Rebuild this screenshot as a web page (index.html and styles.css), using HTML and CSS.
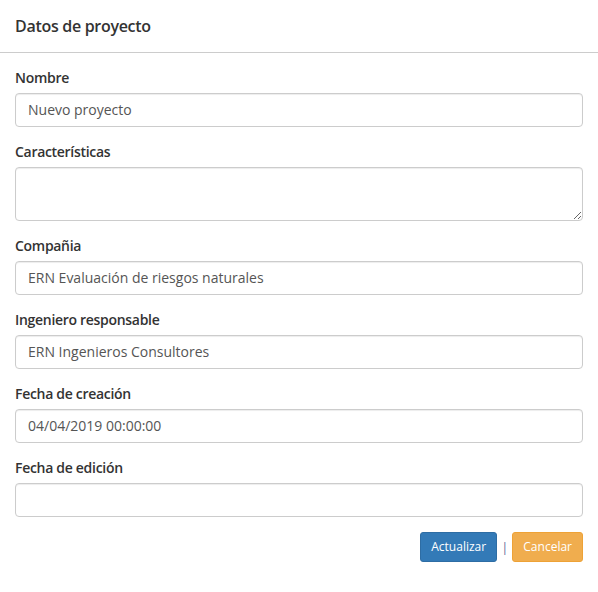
FILE: index.html
```html
<!DOCTYPE html>
<html lang="es">
<head>
    <meta charset="UTF-8">
    <meta name="viewport" content="width=device-width, initial-scale=1.0">
    <title>Datos de proyecto</title>
    <link rel="stylesheet" href="styles.css">
</head>
<body>

<div class="modal">
    <div class="modal-header">
        <h4 class="modal-title">Datos de proyecto</h4>
    </div>
    <div class="modal-body">
        <div class="form-group">
            <label for="nombre">Nombre</label>
            <input type="text" id="nombre" class="form-control" value="Nuevo proyecto">
        </div>
        <div class="form-group">
            <label for="caracteristicas">Características</label>
            <textarea id="caracteristicas" class="form-control" rows="2"></textarea>
        </div>
        <div class="form-group">
            <label for="compania">Compañia</label>
            <input type="text" id="compania" class="form-control" value="ERN Evaluación de riesgos naturales">
        </div>
        <div class="form-group">
            <label for="ingeniero">Ingeniero responsable</label>
            <input type="text" id="ingeniero" class="form-control" value="ERN Ingenieros Consultores">
        </div>
        <div class="form-group">
            <label for="creacion">Fecha de creación</label>
            <input type="text" id="creacion" class="form-control" value="04/04/2019 00:00:00">
        </div>
        <div class="form-group">
            <label for="edicion">Fecha de edición</label>
            <input type="text" id="edicion" class="form-control">
        </div>
        <div class="actions">
            <button class="btn btn-primary">Actualizar</button>
            <span class="sep">|</span>
            <button class="btn btn-warning">Cancelar</button>
        </div>
    </div>
</div>

</body>
</html>
```

FILE: styles.css
```css
body {
    font-family: "Open Sans", Arial, sans-serif;
    font-size: 14px;
    line-height: 1.42857;
    color: #333;
    background-color: white;
    margin: 0;
}
.modal {
    background-color: white;
}
.modal-header {
    padding: 15px;
    border-bottom: 1px solid #ccc;
}
.modal-title {
    margin: 0;
    font-size: 16px;
    font-weight: 600;
    letter-spacing: -0.3px;
    line-height: 22px;
}
.modal-body {
    padding: 15px;
}
.form-group {
    margin-bottom: 15px;
}
label {
    display: block;
    margin-bottom: 5px;
    font-weight: 600;
    letter-spacing: -0.3px;
}
.form-control {
    display: block;
    width: 100%;
    height: 34px;
    padding: 6px 12px;
    font-family: inherit;
    font-size: 14px;
    line-height: 1.42857;
    color: #555;
    background-color: white;
    border: 1px solid #ccc;
    border-radius: 4px;
    box-shadow: inset 0 1px 1px rgba(0, 0, 0, 0.075);
    box-sizing: border-box;
    margin: 0;
}
textarea.form-control {
    height: 54px;
    resize: vertical;
}
.actions {
    display: flex;
    justify-content: flex-end;
    align-items: center;
    gap: 4px;
}
.sep {
    color: #6f6f9a;
    font-size: 13px;
}
.btn {
    font-family: inherit;
    font-size: 12px;
    line-height: 1.5;
    padding: 5px 10px;
    border: 1px solid transparent;
    border-radius: 3px;
    color: white;
    cursor: pointer;
}
.btn-primary {
    background-color: #337ab7;
    border-color: #2e6da4;
}
.btn-warning {
    background-color: #f0ad4e;
    border-color: #eea236;
}
```
